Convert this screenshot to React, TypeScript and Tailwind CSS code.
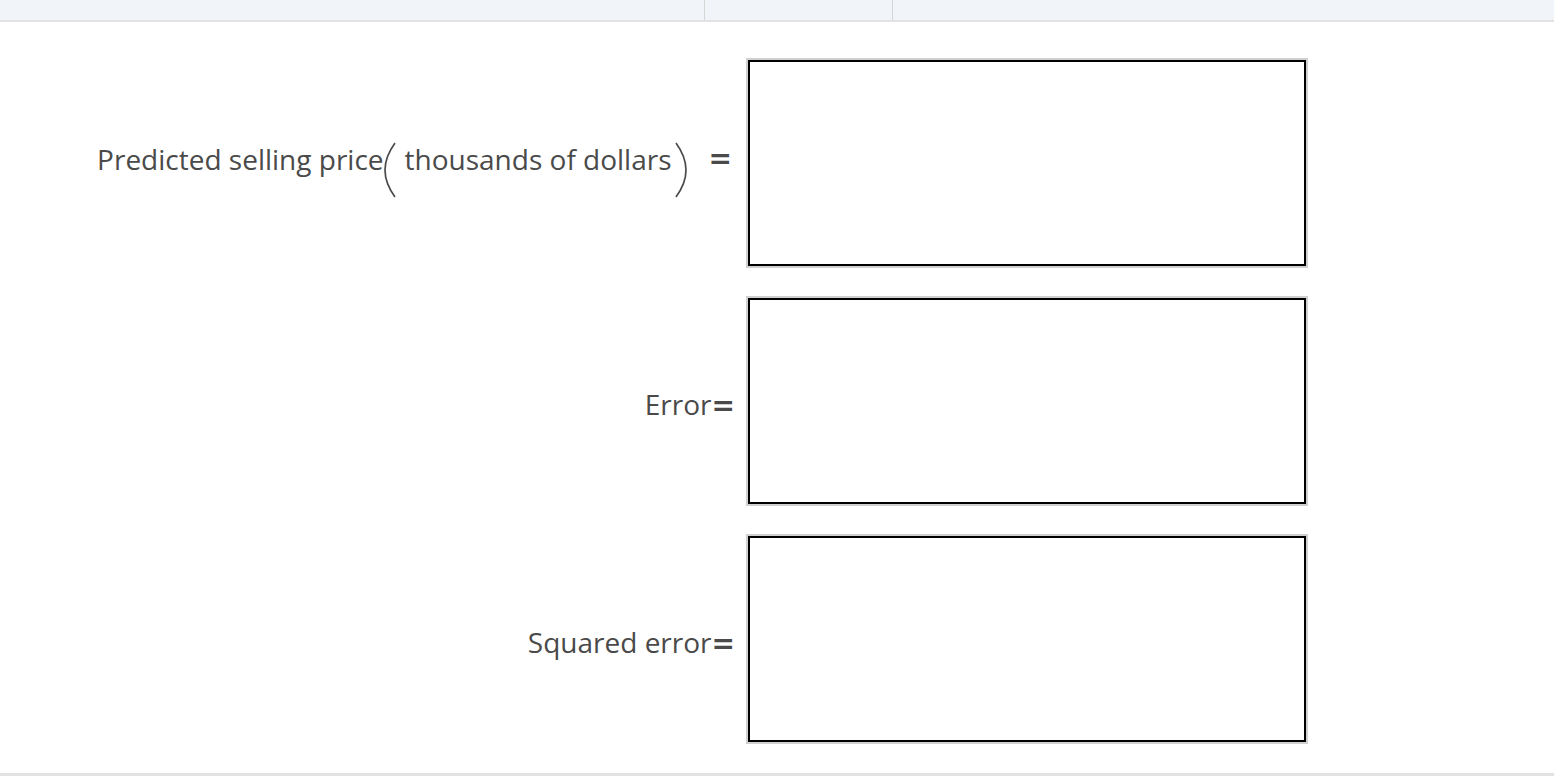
const font = { fontFamily: '"Open Sans", "Liberation Sans", sans-serif' };
const mathFont = { fontFamily: '"DejaVu Sans", "Open Sans", sans-serif' };

function Paren({ side }: { side: 'left' | 'right' }) {
  const d =
    side === 'left'
      ? 'M11 1 C3 12 1 22 1 28 C1 34 3 44 11 55'
      : 'M1 1 C9 12 11 22 11 28 C11 34 9 44 1 55';
  return (
    <svg width="12" height="56" viewBox="0 0 12 56" className="mt-[14px] shrink-0">
      <path d={d} fill="none" stroke="#4a4a4a" strokeWidth="1.7" />
    </svg>
  );
}

function Equals({ className = '' }: { className?: string }) {
  return (
    <span className={`font-bold ${className}`} style={mathFont}>
      =
    </span>
  );
}

function AnswerBox() {
  return <div className="w-[558px] h-[206px] border-2 border-black ring-2 ring-[#d0d0d0] bg-white shrink-0" />;
}

function Row({ children }: { children: React.ReactNode }) {
  return (
    <div className="flex items-center">
      <div className="w-[735px] flex justify-end items-center text-[28px] text-[#4a4a4a] leading-none">
        {children}
      </div>
      <div className="ml-[13px]">
        <AnswerBox />
      </div>
    </div>
  );
}

export default function App() {
  return (
    <div className="w-[1554px] h-[776px] bg-white flex flex-col" style={font}>
      {/* top header strip */}
      <div className="h-[22px] bg-[#f1f5f9] border-b-2 border-[#e2e2e2] flex shrink-0">
        <div className="w-[705px] border-r border-[#d6d6d6]" />
        <div className="w-[188px] border-r border-[#d6d6d6]" />
        <div className="flex-1" />
      </div>

      <div className="flex flex-col gap-[32px] pt-[38px] flex-1">
        <Row>
          <span className="mb-[9px]">Predicted selling price</span>
          <Paren side="left" />
          <span className="mb-[9px] ml-[9px] mr-[3px]">thousands of dollars</span>
          <Paren side="right" />
          <Equals className="mb-[9px] ml-[22px] mr-[3px]" />
        </Row>
        <Row>
          <span className="mt-[7px]">
            Error<Equals />
          </span>
        </Row>
        <Row>
          <span className="mt-[7px]">
            Squared error<Equals />
          </span>
        </Row>
      </div>

      <div className="h-[3px] bg-[#e2e2e2] shrink-0" />
    </div>
  );
}
